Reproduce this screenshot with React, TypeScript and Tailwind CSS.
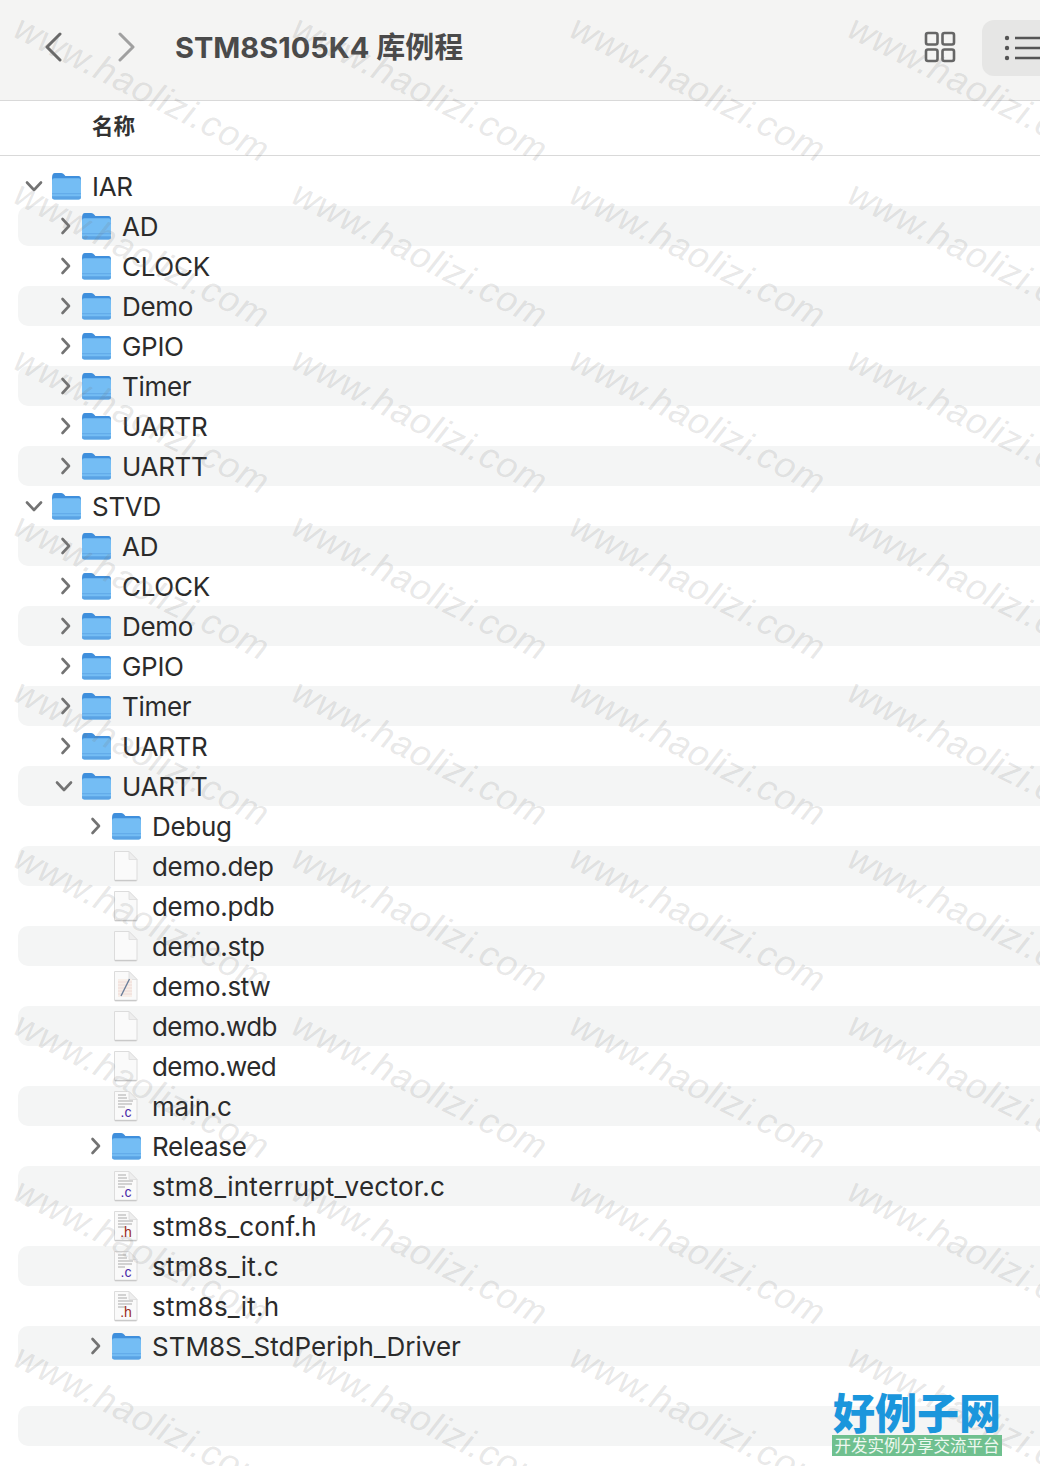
import React from "react";

type Kind = "folder" | "blank" | "note" | "c" | "h";
type Row = { name: string; depth: 0 | 1 | 2; kind: Kind; open?: boolean };

const sub = (open = false): Row[] =>
  ["AD", "CLOCK", "Demo", "GPIO", "Timer", "UARTR", "UARTT"].map((name) => ({
    name,
    depth: 1,
    kind: "folder",
    open: open && name === "UARTT",
  }));

const rows: Row[] = [
  { name: "IAR", depth: 0, kind: "folder", open: true },
  ...sub(),
  { name: "STVD", depth: 0, kind: "folder", open: true },
  ...sub(true),
  { name: "Debug", depth: 2, kind: "folder" },
  { name: "demo.dep", depth: 2, kind: "blank" },
  { name: "demo.pdb", depth: 2, kind: "blank" },
  { name: "demo.stp", depth: 2, kind: "blank" },
  { name: "demo.stw", depth: 2, kind: "note" },
  { name: "demo.wdb", depth: 2, kind: "blank" },
  { name: "demo.wed", depth: 2, kind: "blank" },
  { name: "main.c", depth: 2, kind: "c" },
  { name: "Release", depth: 2, kind: "folder" },
  { name: "stm8_interrupt_vector.c", depth: 2, kind: "c" },
  { name: "stm8s_conf.h", depth: 2, kind: "h" },
  { name: "stm8s_it.c", depth: 2, kind: "c" },
  { name: "stm8s_it.h", depth: 2, kind: "h" },
  { name: "STM8S_StdPeriph_Driver", depth: 2, kind: "folder" },
];

const depthClass = { 0: "pl-[1px]", 1: "pl-[31px]", 2: "pl-[61px]" };

const tracking: Record<string, string> = {
  "demo.wdb": "tracking-[-0.6px]",
  "demo.wed": "tracking-[-0.6px]",
  "stm8_interrupt_vector.c": "tracking-[0.27px]",
  "stm8s_conf.h": "tracking-[0.1px]",
  "stm8s_it.c": "tracking-[0.2px]",
  "stm8s_it.h": "tracking-[0.2px]",
  "STM8S_StdPeriph_Driver": "tracking-[0px]",
};

function Chevron({ open }: { open?: boolean }) {
  return (
    <svg width="30" height="40" viewBox="0 0 30 40" className="shrink-0" fill="none">
      {open ? (
        <path d="M8 16.5 L15 24 L22 16.5" stroke="#737373" strokeWidth="2.6" strokeLinecap="round" strokeLinejoin="round" />
      ) : (
        <path d="M13.5 13 L20 20 L13.5 27" stroke="#737373" strokeWidth="2.6" strokeLinecap="round" strokeLinejoin="round" />
      )}
    </svg>
  );
}

function Folder() {
  return (
    <svg width="29" height="27" viewBox="0 0 30 28" className="ml-[3px] shrink-0">
      <path d="M0 5 Q0 0 3 0 H9.5 Q11.5 0 13 2 L13.8 3 H27.5 Q30 3 30 6 V12 H0 Z" fill="#3f8fdc" />
      <rect x="0" y="5.5" width="30" height="22" rx="2.4" fill="#74bdf4" />
      <rect x="0" y="21" width="30" height="1" fill="#5ea6e6" />
      <path d="M0 24 H30 V25 Q30 27.6 27.5 27.6 H2.5 Q0 27.6 0 25 Z" fill="#5aa3e4" />
    </svg>
  );
}

function Page({ kind }: { kind: Kind }) {
  const code = kind === "c" || kind === "h";
  return (
    <svg width="30" height="32" viewBox="0 0 30 32" className="ml-[2px] shrink-0">
      <path d="M3.5 1.5 H18 L26 9.5 V30 Q26 31 25 31 H4.5 Q3.5 31 3.5 30 Z" fill="#fafafa" stroke="#dcdcdc" strokeWidth="1" />
      <path d="M4 30.4 H25.5" stroke="#c9c9c9" strokeWidth="1.2" />
      <path d="M18 1.5 V9.5 H26 Z" fill="#eeeeee" stroke="#dcdcdc" strokeWidth="0.8" />
      {kind === "note" && (
        <>
          <rect x="7" y="9" width="14" height="18" fill="#f8efe9" />
          <path d="M7 12 H21 M7 15 H21 M7 18 H21 M7 21 H21 M7 24 H21" stroke="#ecd6d2" strokeWidth="0.8" />
          <path d="M10 26 L18.5 9" stroke="#6b7f99" strokeWidth="1.4" />
        </>
      )}
      {code && (
        <>
          <path d="M7 5 H15 M7 8 H16 M7 11 H22 M7 14 H21 M7 17 H14" stroke="#a9a9a9" strokeWidth="1.1" />
          <text
            x="15"
            y="27"
            textAnchor="middle"
            fontSize="14"
            fontFamily="Liberation Sans, sans-serif"
            fill={kind === "c" ? "#4b2aa8" : "#9c2a22"}
          >
            {kind === "c" ? ".c" : ".h"}
          </text>
        </>
      )}
    </svg>
  );
}

function Watermark() {
  return (
    <div className="pointer-events-none absolute inset-0 grid grid-cols-[repeat(4,278px)] auto-rows-[166.1px] overflow-hidden pl-[25px] pt-[9px]">
      {Array.from({ length: 36 }).map((_, i) => (
        <div key={i} className="relative">
          <span className="absolute left-0 top-0 origin-top-left rotate-[27deg] whitespace-nowrap font-['Liberation_Sans',sans-serif] text-[36px] italic leading-none tracking-[1px] text-[rgba(120,120,120,0.18)]">
            www.haolizi.com
          </span>
        </div>
      ))}
    </div>
  );
}

export default function App() {
  return (
    <div className="relative h-[1466px] w-[1040px] overflow-hidden bg-white font-['Inter','Noto_Sans_CJK_SC',sans-serif]">
      <header className="flex h-[101px] items-center border-b border-[#d9d9d9] bg-[#f4f4f3] pb-[6px]">
        <svg width="20" height="30" viewBox="0 0 20 30" className="ml-[44px]" fill="none">
          <path d="M16 2 L3 15 L16 28" stroke="#686868" strokeWidth="3" strokeLinecap="round" strokeLinejoin="round" />
        </svg>
        <svg width="20" height="30" viewBox="0 0 20 30" className="ml-[52px]" fill="none">
          <path d="M4 2 L17 15 L4 28" stroke="#a0a0a0" strokeWidth="3" strokeLinecap="round" strokeLinejoin="round" />
        </svg>
        <h1 className="ml-[39px] text-[29px] font-bold leading-none text-[#4a4a4a]">STM8S105K4 库例程</h1>
        <svg width="32" height="32" viewBox="0 0 32 32" className="ml-auto" fill="none" stroke="#666666" strokeWidth="2.6">
          <rect x="2" y="2" width="11.5" height="11.5" rx="2" />
          <rect x="18.5" y="2" width="11.5" height="11.5" rx="2" />
          <rect x="2" y="18.5" width="11.5" height="11.5" rx="2" />
          <rect x="18.5" y="18.5" width="11.5" height="11.5" rx="2" />
        </svg>
        <div className="ml-[26px] mt-[2px] flex h-[56px] w-[58px] items-center rounded-l-[12px] bg-[#e6e6e5] pl-[21px]">
          <svg width="37" height="26" viewBox="0 0 37 26" fill="none">
            <circle cx="4" cy="3" r="2.2" fill="#555555" />
            <circle cx="4" cy="13" r="2.2" fill="#555555" />
            <circle cx="4" cy="23" r="2.2" fill="#555555" />
            <path d="M12 3 H37 M12 13 H37 M12 23 H37" stroke="#555555" strokeWidth="2.6" />
          </svg>
        </div>
      </header>
      <div className="flex h-[55px] items-center border-b border-[#d9d9d9] pb-[3px] pl-[92px] text-[21.5px] font-bold text-[#333333]">
        名称
      </div>
      <main className="pt-[10px]">
        {rows.map((row, i) => (
          <div
            key={i}
            className={`ml-[18px] flex h-[40px] items-center rounded-l-[10px] ${i % 2 === 1 ? "bg-[#f4f5f5]" : ""} ${depthClass[row.depth]}`}
          >
            {row.kind === "folder" ? <Chevron open={row.open} /> : <span className="w-[30px] shrink-0" />}
            {row.kind === "folder" ? <Folder /> : <Page kind={row.kind} />}
            <span
              className={`ml-[11px] whitespace-nowrap pt-[2px] text-[26px] leading-none text-[#2b2b2b] ${tracking[row.name] ?? "tracking-[-0.3px]"}`}
            >
              {row.name}
            </span>
          </div>
        ))}
        <div className="h-[40px]" />
        <div className="ml-[18px] h-[40px] rounded-l-[10px] bg-[#f4f5f5]" />
      </main>
      <Watermark />
      <div className="absolute left-[832px] top-[1388px] w-[170px]">
        <div className="whitespace-nowrap text-center font-['Noto_Sans_CJK_SC',sans-serif] text-[42px] font-black leading-[46px] text-[#1b96dc]">
          好例子网
        </div>
        <div className="mt-[1px] flex h-[21px] items-center justify-center whitespace-nowrap bg-[#6fc08f] font-['Noto_Sans_CJK_SC',sans-serif] text-[16.5px] leading-none text-[#eef8f0]">
          开发实例分享交流平台
        </div>
      </div>
    </div>
  );
}
